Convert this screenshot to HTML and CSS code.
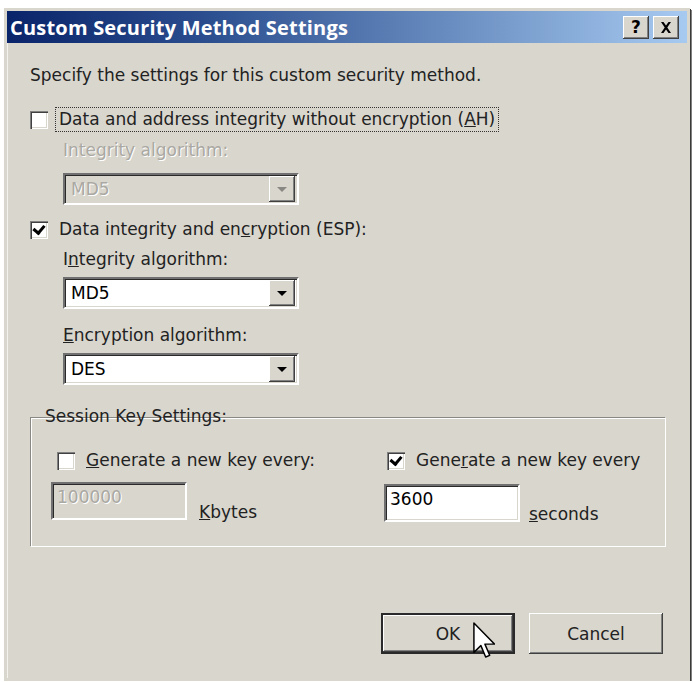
FILE: index.html
```html
<!DOCTYPE html>
<html lang="en">
  <head>
    <meta charset="UTF-8" />
    <title>Custom Security Method Settings</title>
    <link rel="stylesheet" href="styles.css">
  </head>
  <body>
    <div class="window">
      <div class="titlebar">
        <span class="title">Custom Security Method Settings</span>
        <div class="tb-buttons">
          <span class="tb-btn help">?</span>
          <span class="tb-btn close">
            <svg width="12" height="11" viewBox="0 0 12 11"><path d="M1 0h2.5L6 3.6 8.5 0H11L7.3 5.5 11 11H8.5L6 7.4 3.5 11H1l3.7-5.5z" fill="#000"/></svg>
          </span>
        </div>
      </div>

      <div class="content">
        <p class="intro">Specify the settings for this custom security method.</p>

        <div class="check row-ah">
          <span class="box"></span>
          <span class="lbl focused">Data and address integrity without encryption (<u>A</u>H)</span>
        </div>
        <div class="indent">
          <div class="field-label disabled">Integrity algorithm:</div>
          <div class="select disabled"><span class="value">MD5</span><span class="arrow"></span></div>
        </div>

        <div class="check row-esp">
          <span class="box checked"></span>
          <span class="lbl">Data integrity and en<u>c</u>ryption (ESP):</span>
        </div>
        <div class="indent">
          <div class="field-label tight">I<u>n</u>tegrity algorithm:</div>
          <div class="select"><span class="value">MD5</span><span class="arrow"></span></div>
          <div class="field-label">
            <u>E</u>ncryption algorithm:</div>
          <div class="select"><span class="value">DES</span><span class="arrow"></span></div>
        </div>

        <fieldset class="group">
          <legend>Session Key Settings:</legend>
          <div class="cols">
            <div class="col">
              <div class="check">
                <span class="box"></span>
                <span class="lbl"><u>G</u>enerate a new key every:</span>
              </div>
              <div class="entry">
                <span class="textbox disabled">100000</span>
                <span class="unit"><u>K</u>bytes</span>
              </div>
            </div>
            <div class="col right">
              <div class="check">
                <span class="box checked"></span>
                <span class="lbl">Gene<u>r</u>ate a new key every</span>
              </div>
              <div class="entry">
                <span class="textbox">3600</span>
                <span class="unit"><u>s</u>econds</span>
              </div>
            </div>
          </div>
        </fieldset>

        <div class="actions">
          <span class="btn default"><span class="btn-in">OK</span></span>
          <span class="btn">Cancel</span>
          <!-- mouse pointer sitting over the OK button -->
          <svg class="cursor" width="22" height="36" viewBox="0 0 12 19.5">
            <path d="M0.5 0.5v16l3.8-3.7 2.6 6.2 2.2-0.9-2.6-6.1h5.3z" fill="#fff" stroke="#000" stroke-width="0.8" stroke-linejoin="round"/>
          </svg>
        </div>
      </div>
    </div>
  </body>
</html>
```

FILE: styles.css
```css
body {
  margin: 0;
  background: #fff;
  font-family: "DejaVu Sans", Verdana, sans-serif;
  font-size: 17px;
  color: #222;
}
.window {
  width: 680px;
  height: 667px;
  margin: 8px 0 0 4px;
  background: #d9d6ce;
  border: 3px solid #d9d6ce;
  box-shadow: inset 1px 1px #f4f2ec, 1px 1px #3a3a3a, 2px 2px #808080;
  display: flex;
  flex-direction: column;
}
.titlebar {
  height: 32px;
  display: flex;
  align-items: center;
  justify-content: space-between;
  padding: 0 8px 0 3px;
  background: linear-gradient(90deg, #0a246a 0%, #2c4f90 30%, #a6caf0 100%);
}
.title {
  color: #fff;
  font-family: "Open Sans", sans-serif;
  font-weight: 700;
  font-size: 20px;
  letter-spacing: 0.2px;
}
.tb-buttons {
  display: flex;
  gap: 4px;
}
.tb-btn {
  width: 26px;
  height: 23px;
  display: flex;
  align-items: center;
  justify-content: center;
  background: #d9d6ce;
  font-weight: 700;
  font-size: 17px;
  color: #000;
  box-shadow: inset -1px -1px #404040, inset 1px 1px #fff, inset -2px -2px #808080;
}
.content {
  flex: 1;
  padding: 0 22px 0 23px;
  display: flex;
  flex-direction: column;
  position: relative;
}
.intro {
  margin: 23px 0 0;
  line-height: 19px;
}
.check {
  display: flex;
  align-items: center;
  gap: 10px;
  height: 25px;
}
.row-ah { margin-top: 22px; }
.row-esp { margin-top: 12px; }
.box {
  width: 18px;
  height: 18px;
  flex: none;
  background: #fff;
  box-sizing: border-box;
  box-shadow: inset 1px 1px #808080, inset 2px 2px #404040, inset -1px -1px #fff, inset -2px -2px #d9d6ce;
  position: relative;
}
.box.checked::after {
  content: "";
  position: absolute;
  left: 4px;
  top: 3px;
  width: 5px;
  height: 8px;
  border: solid #000;
  border-width: 0 3px 3px 0;
  transform: translate(1px, -1px) rotate(40deg);
}
.lbl {
  line-height: 21px;
  padding: 1px 3px;
  margin-left: -2px;
  white-space: nowrap;
}
.lbl.focused {
  outline: 1px dotted #333;
}
.indent {
  padding-left: 33px;
  display: flex;
  flex-direction: column;
  align-items: flex-start;
}
.field-label {
  margin-top: 17px;
  line-height: 19px;
}
.field-label.tight { margin-top: 8px; }
.disabled {
  color: #aaa8a2;
  text-shadow: 1px 1px #fff;
}
.field-label.disabled { margin-top: 9px; }
.select {
  width: 236px;
  height: 32px;
  margin-top: 8px;
  box-sizing: border-box;
  background: #fff;
  border: 2px solid;
  border-color: #707070 #fff #fff #707070;
  box-shadow: inset 1px 1px #2a2a2a, inset -1px -1px #d9d6ce;
  display: flex;
  align-items: center;
  justify-content: space-between;
  padding: 2px 2px 2px 6px;
  color: #000;
}
.select.disabled {
  background: #d9d6ce;
  margin-top: 13px;
  color: #aaa8a2;
}
.arrow {
  width: 26px;
  height: 26px;
  background: #d9d6ce;
  box-shadow: inset -1px -1px #404040, inset 1px 1px #fff, inset -2px -2px #808080;
  position: relative;
}
.arrow::after {
  content: "";
  position: absolute;
  left: 8px;
  top: 11px;
  border: 5px solid transparent;
  border-top: 5px solid #000;
  border-bottom: 0;
}
.select.disabled .arrow::after {
  border-top-color: #8a8882;
}
.group {
  margin: 22px 0 0 0;
  padding: 24px 18px 0 27px;
  height: 115px;
  border: none;
  box-shadow: inset 1px 1px #8a8882, inset 2px 2px #fff, 1px 1px #fff;
  text-shadow: none;
}
.group legend {
  padding: 0 2px;
  margin-left: -14px;
  line-height: 19px;
}
.cols {
  display: flex;
  margin-top: -2px;
}
.col {
  width: 330px;
  display: flex;
  flex-direction: column;
}
.col.right {
  width: auto;
}
.entry {
  display: flex;
  align-items: flex-end;
  gap: 12px;
  margin-top: 9px;
  margin-left: -6px;
}
.textbox {
  width: 136px;
  height: 38px;
  box-sizing: border-box;
  padding: 2px 4px;
  background: #fff;
  border: 2px solid;
  border-color: #707070 #fff #fff #707070;
  box-shadow: inset 1px 1px #2a2a2a, inset -1px -1px #d9d6ce;
  color: #000;
  line-height: 22px;
}
.textbox.disabled {
  background: #d9d6ce;
  color: #aaa8a2;
}
.col.right .entry {
  margin-top: 11px;
  margin-left: -3px;
  gap: 9px;
}
.unit {
  line-height: 20px;
  margin-bottom: -2px;
}
.actions {
  margin-top: 67px;
  display: flex;
  justify-content: flex-end;
  gap: 14px;
  padding-right: 2px;
  position: relative;
}
.btn {
  width: 134px;
  height: 41px;
  box-sizing: border-box;
  display: flex;
  align-items: center;
  justify-content: center;
  background: #d9d6ce;
  box-shadow: inset -1px -1px #404040, inset 1px 1px #fff, inset -2px -2px #808080;
  font-size: 17px;
}
.btn.default {
  border: 2px solid #2a2a2a;
  box-shadow: none;
}
.btn-in {
  width: 100%;
  height: 100%;
  display: flex;
  align-items: center;
  justify-content: center;
  box-shadow: inset -1px -1px #404040, inset 1px 1px #fff, inset -2px -2px #808080;
}
.cursor {
  position: absolute;
  left: 443px;
  top: 9px;
}
```
